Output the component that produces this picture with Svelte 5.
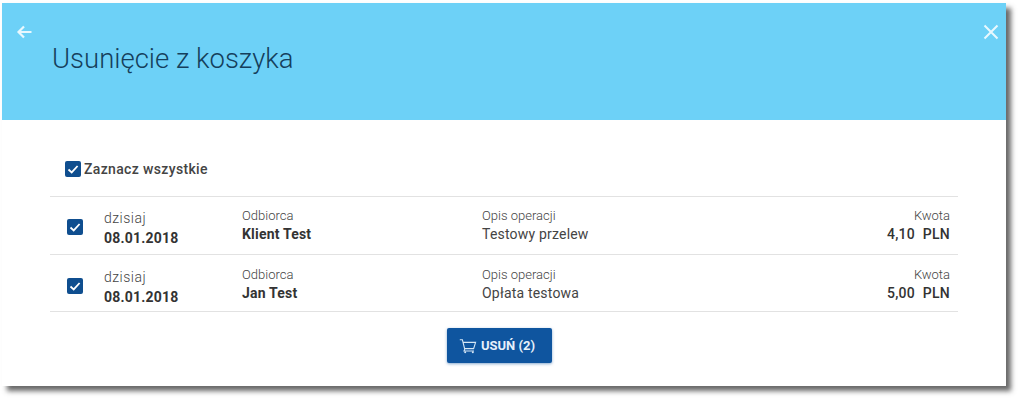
<script>
  const rows = [
    { id: 1, who: 'Klient Test', title: 'Testowy przelew', amount: '4,10' },
    { id: 2, who: 'Jan Test', title: 'Opłata testowa', amount: '5,00' }
  ];
</script>

{#snippet check(cls)}
  <span class="check {cls}">
    <svg viewBox="0 0 16 16" width="16" height="16">
      <path d="M3.5 8.5 L6.7 11.4 L12.6 5" fill="none" stroke="#fff" stroke-width="1.8" />
    </svg>
  </span>
{/snippet}

<div class="page">
  <div class="dialog">
    <header class="head">
      <div class="head-icons">
        <svg class="icon" viewBox="0 0 16 16" width="16" height="16">
          <path d="M15.5 8 H2.5 M8 2.5 L2.5 8 L8 13.5" fill="none" stroke="#e9f8fe" stroke-width="2.2" />
        </svg>
        <svg class="icon" viewBox="0 0 16 16" width="16" height="16">
          <path d="M1.5 1.5 L14.5 14.5 M14.5 1.5 L1.5 14.5" fill="none" stroke="#e9f8fe" stroke-width="2" />
        </svg>
      </div>
      <h1>Usunięcie z koszyka</h1>
    </header>

    <div class="body">
      <div class="select-all">
        {@render check('big')}
        <span>Zaznacz wszystkie</span>
      </div>

      <div class="list">
        {#each rows as row (row.id)}
          <div class="row">
            <div class="cell-check">{@render check('')}</div>
            <div class="cell-date">
              <div class="when">dzisiaj</div>
              <div class="strong">08.01.2018</div>
            </div>
            <div class="cell-who">
              <div class="label">Odbiorca</div>
              <div class="strong">{row.who}</div>
            </div>
            <div class="cell-title">
              <div class="label">Opis operacji</div>
              <div class="value">{row.title}</div>
            </div>
            <div class="cell-amount">
              <div class="label">Kwota</div>
              <div class="amount">{row.amount}&nbsp; PLN</div>
            </div>
          </div>
        {/each}
      </div>

      <div class="actions">
        <button class="remove">
          <svg viewBox="0 0 18 16" width="18" height="16">
            <path d="M0.8 1.8 H3.4 L5.6 10.6 H14.6 L16.6 4.4 H4.2 M6 10.6 L5 13 H15" fill="none" stroke="#d5e6f5" stroke-width="1.1" />
            <circle cx="6.2" cy="14.2" r="1" fill="#d5e6f5" />
            <circle cx="13.8" cy="14.2" r="1" fill="#d5e6f5" />
          </svg>
          USUŃ (2)
        </button>
      </div>
    </div>
  </div>
</div>

<style>
  :global(body) {
    background: #fff;
  }

  .page {
    height: 409px;
    box-sizing: border-box;
    padding: 3px 0 0 2px;
  }

  .dialog {
    width: 1004px;
    height: 383px;
    background: #fff;
    box-shadow: 5px 5px 5px rgba(40, 40, 40, 0.7);
    font-family: Roboto, "Liberation Sans", sans-serif;
    display: flex;
    flex-direction: column;
  }

  .head {
    height: 117px;
    background: #6dd1f7;
    box-sizing: border-box;
    padding: 21px 7px 0 14px;
  }

  .head-icons {
    display: flex;
    justify-content: space-between;
  }

  .icon {
    display: block;
  }

  h1 {
    margin: 3px 0 0 36px;
    font-size: 27.5px;
    font-weight: 300;
    line-height: 32px;
    color: #153f5c;
  }

  .body {
    padding: 40px 48px 0;
  }

  .select-all {
    display: flex;
    align-items: center;
    gap: 3px;
    height: 18px;
    margin-left: 15px;
    font-size: 14px;
    font-weight: 500;
    letter-spacing: 0.35px;
    color: #444;
  }

  .check {
    width: 16px;
    height: 16px;
    background: #0f4e8f;
    border-radius: 2px;
    display: block;
  }

  .check svg {
    display: block;
  }

  .list {
    margin-top: 18px;
    border-top: 1px solid #e2e2e2;
  }

  .row {
    height: 57px;
    border-bottom: 1px solid #e2e2e2;
    display: grid;
    grid-template-columns: 54px 138px 240px 1fr 200px;
    box-sizing: border-box;
    padding: 12px 8px 0 0;
  }

  .row:first-child {
    height: 58px;
    padding-top: 11px;
  }

  .cell-check {
    padding: 11px 0 0 17px;
  }

  .cell-date {
    padding-top: 2px;
  }

  .label,
  .when {
    font-size: 13px;
    font-weight: 300;
    line-height: 15px;
    color: #444;
  }

  .when {
    font-size: 14px;
    line-height: 16px;
    letter-spacing: 0.5px;
  }

  .strong {
    font-size: 14px;
    font-weight: 700;
    line-height: 16px;
    margin-top: 4px;
    letter-spacing: 0.2px;
    color: #333;
  }

  .cell-who .strong {
    margin-top: 3px;
  }

  .value {
    font-size: 14px;
    line-height: 16px;
    margin-top: 3px;
    letter-spacing: 0.2px;
    color: #444;
  }

  .cell-amount {
    text-align: right;
  }

  .amount {
    font-size: 14px;
    font-weight: 500;
    line-height: 16px;
    margin-top: 3px;
    letter-spacing: 0.3px;
    color: #333;
  }

  .actions {
    display: flex;
    justify-content: center;
    padding: 16px 10px 0 0;
  }

  .remove {
    width: 105px;
    height: 35px;
    border: none;
    border-radius: 2px;
    background: #0f559f;
    box-shadow: 0 1px 3px rgba(15, 85, 159, 0.5);
    color: #e6f0fa;
    font-family: inherit;
    font-size: 13px;
    font-weight: 700;
    display: flex;
    align-items: center;
    justify-content: center;
    gap: 4px;
    padding: 0 4px 0 0;
  }
</style>
